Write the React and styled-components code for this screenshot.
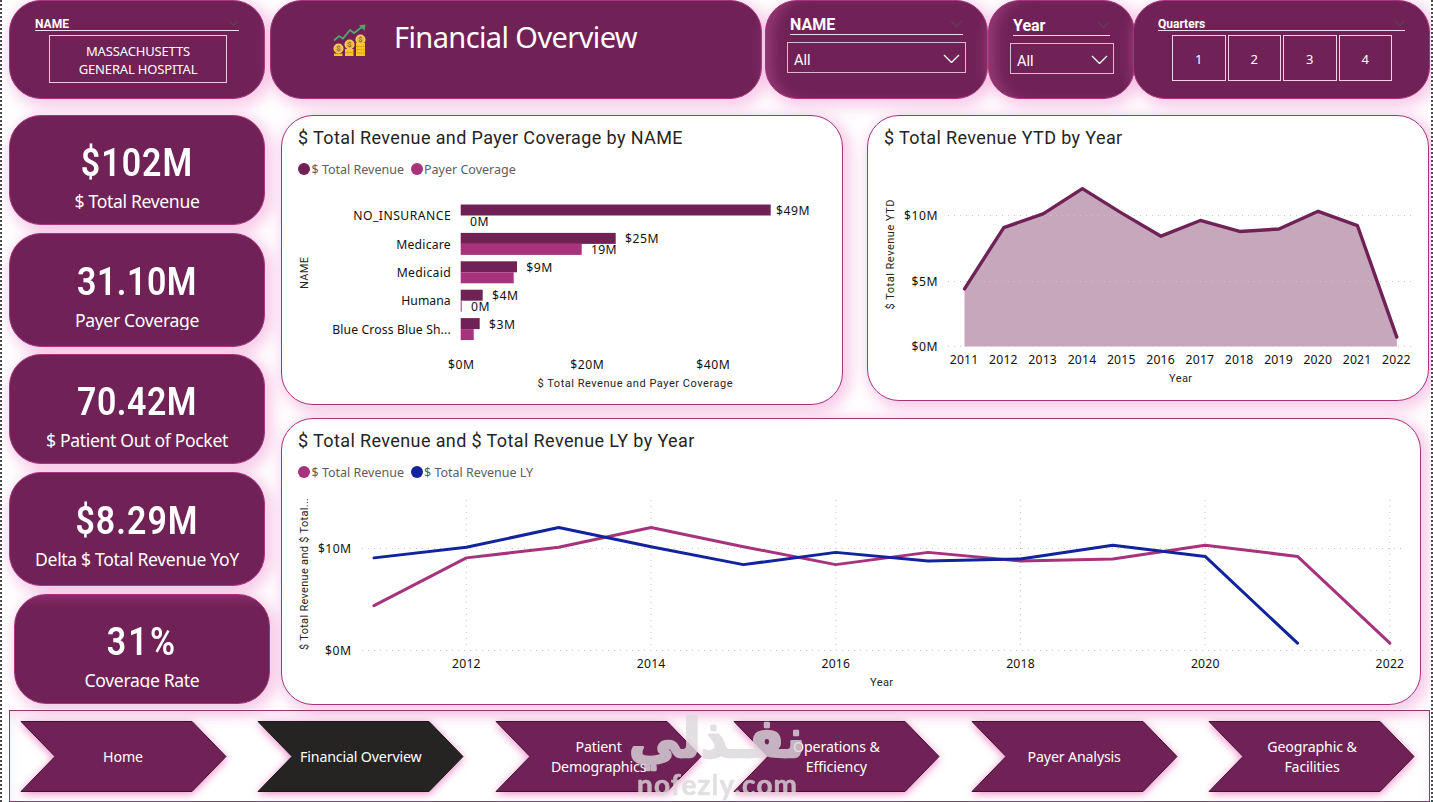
import React from "react";
import styled, { createGlobalStyle, css } from "styled-components";

const GlobalStyle = createGlobalStyle`
  * {
    box-sizing: border-box;
  }

  body {
    margin: 0;
    background: #fff;
    font-family: "Noto Sans", "Open Sans", sans-serif;
    overflow: hidden;
  }
`;

const plum = "#702256";
const magenta = "#a6337c";
const blue = "#12239e";
const segoe = '"Noto Sans", "Open Sans", sans-serif';
const din = 'Roboto, "Liberation Sans", sans-serif';

const years = [2011, 2012, 2013, 2014, 2015, 2016, 2017, 2018, 2019, 2020, 2021, 2022];
const revenue = [4.4, 9.08, 10.12, 12.05, 10.18, 8.42, 9.62, 8.78, 8.97, 10.32, 9.22, 0.72];

const kpis = [
  { value: "$102M", label: "$ Total Revenue", height: 110, top: 24 },
  { value: "31.10M", label: "Payer Coverage", height: 114, top: 25, clip: 22, spacing: 0.6 },
  { value: "70.42M", label: "$ Patient Out of Pocket", height: 110, top: 24, spacing: 0.6 },
  { value: "$8.29M", label: "Delta $ Total Revenue YoY", height: 114, top: 25 },
  { value: "31%", label: "Coverage Rate", height: 110, top: 24, clip: 20, shift: 5, spacing: 2.6, glow: true },
];

const payers = [
  { name: "NO_INSURANCE", len: 97.5, revenue: 310, coverage: 0, revLabel: "$49M", covLabel: "0M" },
  { name: "Medicare", len: 54.5, revenue: 155, coverage: 121, revLabel: "$25M", covLabel: "19M" },
  { name: "Medicaid", len: 54, revenue: 56.3, coverage: 53, revLabel: "$9M" },
  { name: "Humana", len: 49.5, revenue: 22, coverage: 1, revLabel: "$4M", covLabel: "0M" },
  { name: "Blue Cross Blue Sh...", len: 118.5, revenue: 19, coverage: 13, revLabel: "$3M" },
];

const pages = [
  ["Home"],
  ["Financial Overview"],
  ["Patient", "Demographics"],
  ["Operations &", "Efficiency"],
  ["Payer Analysis"],
  ["Geographic &", "Facilities"],
];

const Page = styled.div`
  width: 1433px;
  height: 802px;
  padding: 0 1px 0 7px;
  overflow: hidden;
  position: relative;
  display: flex;
  flex-direction: column;
  background: #fff;
  border-left: 2px dotted #4a4a4a;
  border-right: 2px dotted #4a4a4a;
`;

const cardStyle = css`
  background: ${plum};
  border: 1px solid ${magenta};
  border-radius: 32px;
  box-shadow: 4px 4px 14px 4px rgba(236, 120, 196, 0.38);
  color: #fff;
`;

const TopBar = styled.header`
  display: flex;
  height: 99px;
  flex: none;
`;

const TopCard = styled.div`
  ${cardStyle}
  flex: none;
  width: ${(p) => p.$width}px;
  margin-left: ${(p) => p.$gap || 0}px;
  padding: ${(p) => p.$padding || "0"};
  ${(p) =>
    p.$glow &&
    css`
      box-shadow: inset 14px 0 14px -8px rgba(200, 90, 160, 0.45),
        4px 4px 14px 4px rgba(236, 120, 196, 0.38);
    `}
`;

const TitleCard = styled(TopCard)`
  display: flex;
  align-items: flex-start;
`;

const PageTitle = styled.h1`
  margin: 14px 0 0 27px;
  font-family: ${segoe};
  font-size: 29px;
  line-height: 44px;
  font-weight: 400;
  letter-spacing: -0.6px;
  white-space: nowrap;
`;

const SlicerHead = styled.div`
  display: flex;
  justify-content: space-between;
  align-items: flex-end;
  height: ${(p) => p.$height}px;
  border-bottom: 1px solid #f3dcea;
  font-family: ${din};
  font-size: ${(p) => p.$size}px;
  line-height: ${(p) => (p.$size > 12 ? p.$size + 2 : 12)}px;
  font-weight: 700;

  svg {
    margin-bottom: ${(p) => (p.$size > 12 ? 7 : 4)}px;
  }
`;

const HospitalButton = styled.div`
  width: 178px;
  height: 48px;
  margin: 4px 0 0 14px;
  border: 1px solid #f0c6e2;
  padding-top: 6px;
  text-align: center;
  font-size: 13px;
  line-height: 18px;
  letter-spacing: -0.15px;
`;

const Select = styled.div`
  display: flex;
  align-items: center;
  justify-content: space-between;
  width: ${(p) => p.$width}px;
  height: 31px;
  margin: 7px 0 0 -3px;
  padding: 2px 5px 0 6px;
  border: 1px solid #dcb9d0;
  font-family: ${din};
  font-size: 14.5px;
  line-height: 20px;

  span {
    padding-top: 4px;
  }
`;

const Quarters = styled.div`
  display: grid;
  grid-template-columns: repeat(4, 53.5px);
  gap: 2px;
  margin: 4px 0 0 14px;
`;

const Quarter = styled.div`
  height: 46px;
  border: 1px solid #f3cfe5;
  display: flex;
  align-items: center;
  justify-content: center;
  padding-top: 2px;
  font-size: 13px;
`;

const Main = styled.main`
  display: flex;
  height: 611px;
  padding-top: 16px;
  flex: none;
`;

const KpiColumn = styled.section`
  width: 256px;
  flex: none;
  display: flex;
  flex-direction: column;
  gap: 7.7px;
`;

const KpiCard = styled.article`
  ${cardStyle}
  flex: none;
  width: 256px;
  height: ${(p) => p.$height}px;
  margin-left: ${(p) => p.$shift || 0}px;
  padding-top: ${(p) => p.$top}px;
  text-align: center;
  ${(p) =>
    p.$glow &&
    css`
      background: linear-gradient(#8b2a6b, ${plum} 12px);
    `}
`;

const KpiValue = styled.div`
  font-family: ${din};
  font-size: 39px;
  font-weight: 600;
  line-height: 46px;
  letter-spacing: ${(p) => p.$spacing || 1.2}px;
  transform: scaleX(0.87);
`;

const KpiLabel = styled.div`
  margin-top: 3px;
  font-size: 17.6px;
  line-height: 24px;
  height: ${(p) => p.$clip || 26}px;
  letter-spacing: -0.35px;
  overflow: hidden;
  white-space: nowrap;
`;

const Panels = styled.section`
  flex: none;
  width: 1149px;
  margin-left: 16px;
`;

const PanelRow = styled.div`
  display: flex;
  align-items: flex-start;
  gap: 24px;
  height: 303px;
`;

const Panel = styled.article`
  flex: none;
  width: ${(p) => p.$width}px;
  height: ${(p) => p.$height}px;
  padding-top: 10px;
  background: #fff;
  border: 1px solid ${magenta};
  border-radius: 32px;
  box-shadow: 4px 4px 14px 4px rgba(236, 120, 196, 0.38);
  overflow: hidden;

  svg {
    display: block;
  }
`;

const PanelTitle = styled.h2`
  margin: 0 0 ${(p) => p.$gap || 0}px 16px;
  font-family: ${din};
  font-size: 18px;
  font-weight: 400;
  line-height: 24px;
  letter-spacing: 0.39px;
  color: #252423;
  white-space: nowrap;
`;

const Legend = styled.div`
  display: flex;
  align-items: center;
  gap: 6.5px;
  height: 20px;
  margin: 9px 0 6px 16px;
  color: #605e5c;
  font-size: 12.5px;
`;

const LegendItem = styled.span`
  display: flex;
  align-items: center;
  gap: 1.5px;

  &::before {
    content: "";
    width: 12px;
    height: 12px;
    border-radius: 50%;
    background: ${(p) => p.$color};
  }
`;

const Tick = styled.text`
  font-family: ${segoe};
  font-size: 12.2px;
  fill: #111;
`;

const AxisTitle = styled.text`
  font-family: ${din};
  font-size: 11px;
  fill: #252423;
`;

const GridLine = styled.path`
  fill: none;
  stroke: #c8c6c4;
  stroke-width: 1;
  stroke-dasharray: 1 5;
`;

const Nav = styled.nav`
  display: flex;
  gap: 31.8px;
  height: 92px;
  flex: none;
  width: 1421px;
  padding: 10px 0 0 10.5px;
  border: 1px solid #8d3a72;
  box-shadow: inset 0 8px 14px -4px rgba(236, 120, 196, 0.3);
`;

const NavItem = styled.a`
  flex: none;
  display: grid;
  width: 206px;
  height: 71px;
  color: #fff;

  > * {
    grid-area: 1 / 1;
  }

  svg {
    overflow: visible;
    filter: drop-shadow(0 2px 4px rgba(226, 60, 160, 0.6));
  }
`;

const NavLabel = styled.span`
  position: relative;
  display: flex;
  flex-direction: column;
  align-items: center;
  justify-content: center;
  padding-right: 1px;
  font-size: 14.2px;
  line-height: 19.5px;
  letter-spacing: -0.15px;
`;

const Watermark = styled.svg`
  position: absolute;
  left: 609px;
  top: 702px;
  opacity: 0.8;
`;

const IconSvg = styled.svg`
  flex: none;
  margin: 23px 0 0 62px;
`;

function Chevron({ width = 15, color = "#fff" }) {
  const h = width / 2;
  return (
    <svg width={width + 2} height={h + 2} viewBox={`-1 -1 ${width + 2} ${h + 2}`} fill="none" stroke={color}>
      <path d={`M0 0L${width / 2} ${h}L${width} 0`} strokeWidth="1.4" />
    </svg>
  );
}

function Coin({ x, y }) {
  return (
    <g transform={`translate(${x} ${y})`}>
      <circle r="5" fill="#fbcb5c" />
      <circle r="3.7" fill="#efb94c" />
      <text y="2.8" textAnchor="middle" fontFamily="Roboto" fontWeight="700" fontSize="7.5" fill="#96702f">
        $
      </text>
    </g>
  );
}

function MoneyIcon() {
  return (
    <IconSvg width="34" height="34" viewBox="0 0 34 34">
      <path d="M1 16.5l5-4.5 4 2.500 7-8.500 4 3 8-6" fill="none" stroke="#4fa66f" strokeWidth="1.8" />
      <path d="M26 1.200l6.500-.8-1 6.400z" fill="#4fa66f" />
      <path d="M1 29.500h8.500v2.500H1zM12 25h8.500v7H12zM23 19h9v13h-9z" fill="#fbc51f" />
      <path d="M12 28.500h8.500M23 22.500h9M23 25.700h9M23 28.900h9" stroke="#d99a16" strokeWidth=".8" />
      <Coin x={5.5} y={24.5} />
      <Coin x={16.5} y={20.5} />
      <Coin x={27.5} y={15.5} />
    </IconSvg>
  );
}

function PayerChart() {
  return (
    <svg width="560" height="219" viewBox="282 185 560 219">
      {payers.map((p, i) => {
        const y = 204.5 + i * 28.4;
        return (
          <g key={p.name}>
            <Tick x="450.7" y={y + 15.7} textAnchor="end" textLength={p.len}>
              {p.name}
            </Tick>
            <rect x="460.7" y={y} width={p.revenue} height="11" fill={plum} />
            <rect x="460.7" y={y + 11} width={p.coverage} height="11" fill={magenta} />
            <Tick x={461 + p.revenue + (i === 0 ? 5 : 9)} y={y + 10.5} textLength={p.revLabel.length === 4 ? 33.5 : 26}>
              {p.revLabel}
            </Tick>
            {p.covLabel && (
              <Tick x={470 + p.coverage} y={y + 21.3} textLength={p.covLabel.length === 3 ? 25.5 : 18.5}>
                {p.covLabel}
              </Tick>
            )}
          </g>
        );
      })}
      <Tick x="461" y="369" textAnchor="middle" textLength="26">$0M</Tick>
      <Tick x="587" y="369" textAnchor="middle" textLength="33.5">$20M</Tick>
      <Tick x="713" y="369" textAnchor="middle" textLength="33.5">$40M</Tick>
      <AxisTitle x="635" y="387" textAnchor="middle" textLength="195">
        $ Total Revenue and Payer Coverage
      </AxisTitle>
      <AxisTitle transform="translate(308 273) rotate(-90)" textAnchor="middle" textLength="32">
        NAME
      </AxisTitle>
    </svg>
  );
}

function YtdChart() {
  const x = (i) => 964.5 + i * 39.3;
  const y = (v) => 346.5 - v * 13.1;
  const points = revenue.map((v, i) => `${x(i)},${y(v)}`).join(" ");
  return (
    <svg width="560" height="244" viewBox="868 156 560 244">
      <polygon points={`${x(0)},346.5 ${points} ${x(11)},346.5`} fill={plum} fillOpacity="0.4" />
      <GridLine d="M948 215.5H1414M948 281.5H1414M948 346.5H1414" />
      <polyline points={points} fill="none" stroke={plum} strokeWidth="3.4" strokeLinecap="round" strokeLinejoin="round" />
      <Tick x="937.5" y="220" textAnchor="end" textLength="33.5">$10M</Tick>
      <Tick x="937.5" y="286" textAnchor="end" textLength="26">$5M</Tick>
      <Tick x="937.5" y="351" textAnchor="end" textLength="26">$0M</Tick>
      {years.map((year, i) => (
        <Tick key={year} x={x(i) - 0.5} y="364" textAnchor="middle" textLength="28.5">
          {year}
        </Tick>
      ))}
      <AxisTitle x="1180.5" y="382" textAnchor="middle" textLength="23">Year</AxisTitle>
      <AxisTitle transform="translate(894 254.5) rotate(-90)" textAnchor="middle" textLength="110">
        $ Total Revenue YTD
      </AxisTitle>
    </svg>
  );
}

function TrendChart() {
  const x = (i) => 374 + i * 92.35;
  const y = (v) => 650.5 - v * 10.2;
  const line = (values) => values.map((v, i) => `${x(i)},${y(v)}`).join(" ");
  return (
    <svg width="1138" height="216" viewBox="282 488 1138 216">
      <GridLine d="M362 548.5H1402M362 650.5H1402" />
      {years.map((year, i) =>
        year % 2 === 0 ? (
          <g key={year}>
            <GridLine d={`M${x(i)} 500V650`} />
            <Tick x={x(i)} y="668" textAnchor="middle" textLength="28.5">
              {year}
            </Tick>
          </g>
        ) : null
      )}
      <polyline points={line(revenue)} fill="none" stroke={magenta} strokeWidth="3" strokeLinecap="round" strokeLinejoin="round" />
      <polyline points={line(revenue.slice(1))} fill="none" stroke={blue} strokeWidth="3" strokeLinecap="round" strokeLinejoin="round" />
      <Tick x="351" y="553" textAnchor="end" textLength="33">$10M</Tick>
      <Tick x="351" y="655" textAnchor="end" textLength="26">$0M</Tick>
      <AxisTitle x="881.5" y="686" textAnchor="middle" textLength="23">Year</AxisTitle>
      <AxisTitle transform="translate(308 574) rotate(-90)" textAnchor="middle" textLength="152">
        $ Total Revenue and $ Total...
      </AxisTitle>
    </svg>
  );
}

export default function App() {
  return (
    <>
      <GlobalStyle />
      <Page>
        <TopBar>
          <TopCard $width={256} $padding="0 25px">
            <SlicerHead $height={30} $size={12}>
              NAME
              <Chevron width={9} color="#5f3c58" />
            </SlicerHead>
            <HospitalButton>
              MASSACHUSETTS
              <br />
              GENERAL HOSPITAL
            </HospitalButton>
          </TopCard>
          <TitleCard $width={492} $gap={5}>
            <MoneyIcon />
            <PageTitle>Financial Overview</PageTitle>
          </TitleCard>
          <TopCard $width={223} $gap={3} $padding="0 24px" $glow>
            <SlicerHead $height={34} $size={16}>
              NAME
              <Chevron width={11} color="#5f3c58" />
            </SlicerHead>
            <Select $width={179}>
              <span>All</span>
              <Chevron />
            </Select>
          </TopCard>
          <TopCard $width={147} $padding="0 24px" $glow>
            <SlicerHead $height={35} $size={16}>
              Year
              <Chevron width={11} color="#5f3c58" />
            </SlicerHead>
            <Select $width={104}>
              <span>All</span>
              <Chevron />
            </Select>
          </TopCard>
          <TopCard $width={297} $gap={-2} $padding="0 24px">
            <SlicerHead $height={30} $size={12}>
              Quarters
              <Chevron width={9} color="#5f3c58" />
            </SlicerHead>
            <Quarters>
              {[1, 2, 3, 4].map((q) => (
                <Quarter key={q}>{q}</Quarter>
              ))}
            </Quarters>
          </TopCard>
        </TopBar>
        <Main>
          <KpiColumn>
            {kpis.map((k) => (
              <KpiCard key={k.label} $height={k.height} $top={k.top} $shift={k.shift} $glow={k.glow}>
                <KpiValue $spacing={k.spacing}>{k.value}</KpiValue>
                <KpiLabel $clip={k.clip}>{k.label}</KpiLabel>
              </KpiCard>
            ))}
          </KpiColumn>
          <Panels>
            <PanelRow>
              <Panel $width={562} $height={290}>
                <PanelTitle>$ Total Revenue and Payer Coverage by NAME</PanelTitle>
                <Legend>
                  <LegendItem $color={plum}>$ Total Revenue</LegendItem>
                  <LegendItem $color={magenta}>Payer Coverage</LegendItem>
                </Legend>
                <PayerChart />
              </Panel>
              <Panel $width={562} $height={286}>
                <PanelTitle $gap={6}>$ Total Revenue YTD by Year</PanelTitle>
                <YtdChart />
              </Panel>
            </PanelRow>
            <Panel $width={1140} $height={287}>
              <PanelTitle>$ Total Revenue and $ Total Revenue LY by Year</PanelTitle>
              <Legend>
                <LegendItem $color={magenta}>$ Total Revenue</LegendItem>
                <LegendItem $color={blue}>$ Total Revenue LY</LegendItem>
              </Legend>
              <TrendChart />
            </Panel>
          </Panels>
        </Main>
        <Nav>
          {pages.map((lines, i) => (
            <NavItem key={lines[0]}>
              <svg width="206" height="71" viewBox="0 0 206 71">
                <path
                  d="M0 .5H171L205 35.5L171 70.5H0L34 35.5Z"
                  fill={i === 1 ? "#252423" : plum}
                  stroke={i === 1 ? "#1b1a19" : "#3d1431"}
                />
              </svg>
              <NavLabel>
                {lines.map((l) => (
                  <span key={l}>{l}</span>
                ))}
              </NavLabel>
            </NavItem>
          ))}
        </Nav>
        <Watermark width="210" height="100" viewBox="611 702 210 100" fill="#dcd8dc" stroke="#dcd8dc" strokeLinejoin="round">
          <text
            x="717"
            y="757"
            textAnchor="middle"
            fontFamily="DejaVu Sans"
            fontWeight="700"
            fontSize="54"
            strokeWidth="2.5"
            textLength="176"
            lengthAdjust="spacingAndGlyphs"
          >
            نفـذلي
          </text>
          <text
            x="717"
            y="795"
            textAnchor="middle"
            fontFamily="Lato"
            fontWeight="700"
            fontSize="28"
            strokeWidth="0.6"
            textLength="160"
          >
            nofezly.com
          </text>
        </Watermark>
      </Page>
    </>
  );
}
